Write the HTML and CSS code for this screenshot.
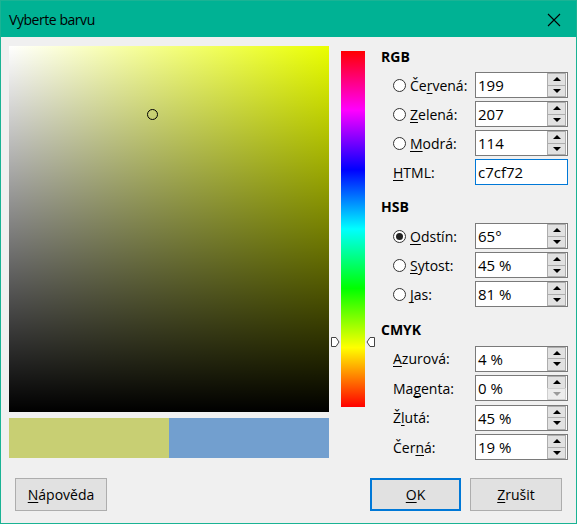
FILE: index.html
```html
<!DOCTYPE html>
<html lang="cs">
<head>
<meta charset="utf-8">
<title>Vyberte barvu</title>
<link rel="stylesheet" href="styles.css">
</head>
<body>
<div class="window">
  <header class="titlebar">
    <span class="title">Vyberte barvu</span>
    <svg class="close" width="14" height="14" viewBox="0 0 14 14"><path d="M1 1L13 13M13 1L1 13" stroke="#000" stroke-width="1.1" fill="none"/></svg>
  </header>

  <main class="content">
    <div class="picker">
      <div class="field-col">
        <div class="field">
          <span class="cursor"></span>
        </div>
        <div class="preview">
          <div class="swatch swatch-new"></div>
          <div class="swatch swatch-old"></div>
        </div>
      </div>

      <div class="hue-wrap">
        <div class="hue"></div>
        <svg class="marker marker-left" width="9" height="10" viewBox="0 0 9 10"><path d="M0.5 0.5H5L8 5L5 9.5H0.5Z" fill="#fff" stroke="#444"/></svg>
        <svg class="marker marker-right" width="9" height="10" viewBox="0 0 9 10"><path d="M8.5 0.5H4L1 5L4 9.5H8.5Z" fill="#fff" stroke="#444"/></svg>
      </div>

      <div class="panel">
        <section class="group">
          <h2 class="group-title">RGB</h2>
          <div class="row">
            <span class="radio"></span>
            <span class="label">Če<u>r</u>vená:</span>
            <div class="spin"><span class="value">199</span><span class="spin-btns"><span class="btn up"></span><span class="btn down"></span></span></div>
          </div>
          <div class="row">
            <span class="radio"></span>
            <span class="label"><u>Z</u>elená:</span>
            <div class="spin"><span class="value">207</span><span class="spin-btns"><span class="btn up"></span><span class="btn down"></span></span></div>
          </div>
          <div class="row">
            <span class="radio"></span>
            <span class="label"><u>M</u>odrá:</span>
            <div class="spin"><span class="value">114</span><span class="spin-btns"><span class="btn up"></span><span class="btn down"></span></span></div>
          </div>
          <div class="row">
            <span class="label"><u>H</u>TML:</span>
            <div class="spin spin-focus"><span class="value">c7cf72</span></div>
          </div>
        </section>

        <section class="group group-hsb">
          <h2 class="group-title">HSB</h2>
          <div class="row">
            <span class="radio checked"></span>
            <span class="label"><u>O</u>dstín:</span>
            <div class="spin"><span class="value">65°</span><span class="spin-btns"><span class="btn up"></span><span class="btn down"></span></span></div>
          </div>
          <div class="row">
            <span class="radio"></span>
            <span class="label"><u>S</u>ytost:</span>
            <div class="spin"><span class="value">45 %</span><span class="spin-btns"><span class="btn up"></span><span class="btn down"></span></span></div>
          </div>
          <div class="row">
            <span class="radio"></span>
            <span class="label"><u>J</u>as:</span>
            <div class="spin"><span class="value">81 %</span><span class="spin-btns"><span class="btn up"></span><span class="btn down"></span></span></div>
          </div>
        </section>

        <section class="group group-cmyk">
          <h2 class="group-title">CMYK</h2>
          <div class="row">
            <span class="label"><u>A</u>zurová:</span>
            <div class="spin"><span class="value">4 %</span><span class="spin-btns"><span class="btn up"></span><span class="btn down"></span></span></div>
          </div>
          <div class="row">
            <span class="label">Ma<u>g</u>enta:</span>
            <div class="spin"><span class="value">0 %</span><span class="spin-btns"><span class="btn up"></span><span class="btn down disabled"></span></span></div>
          </div>
          <div class="row">
            <span class="label">Ž<u>l</u>utá:</span>
            <div class="spin"><span class="value">45 %</span><span class="spin-btns"><span class="btn up"></span><span class="btn down"></span></span></div>
          </div>
          <div class="row">
            <span class="label">Čer<u>n</u>á:</span>
            <div class="spin"><span class="value">19 %</span><span class="spin-btns"><span class="btn up"></span><span class="btn down"></span></span></div>
          </div>
        </section>
      </div>
    </div>

    <footer class="buttons">
      <button class="button"><u>N</u>ápověda</button>
      <span class="spacer"></span>
      <button class="button button-default"><u>O</u>K</button>
      <button class="button"><u>Z</u>rušit</button>
    </footer>
  </main>
</div>
</body>
</html>
```

FILE: styles.css
```css
* { box-sizing: border-box; }

html, body {
  margin: 0;
  padding: 0;
  background: #f0f0f0;
}

body {
  font-family: "Open Sans", "Noto Sans", sans-serif;
  font-size: 14px;
  color: #000;
}

u {
  text-decoration-thickness: 1px;
  text-underline-offset: 2px;
  text-decoration-skip-ink: none;
}

.window {
  width: 577px;
  height: 524px;
  border: 1px solid #1ab394;
  background: #f0f0f0;
  display: flex;
  flex-direction: column;
}

/* title bar */
.titlebar {
  height: 36px;
  background: #00b294;
  display: flex;
  align-items: center;
  padding: 0 15px 0 8px;
  flex-shrink: 0;
}

.title {
  font-size: 14px;
  letter-spacing: -0.45px;
  flex: 1;
}

.close { display: block; margin-top: 1px; }

/* dialog body */
.content {
  flex: 1;
  display: flex;
  flex-direction: column;
}

.picker {
  display: flex;
  padding: 9px 0 0 8px;
}

.field-col {
  width: 320px;
  display: flex;
  flex-direction: column;
  gap: 6px;
}

.field {
  position: relative;
  height: 366px;
  background:
    linear-gradient(to bottom, rgba(0,0,0,0), #000),
    linear-gradient(to right, #fff, #eaff00);
}

.cursor {
  position: absolute;
  left: 138px;
  top: 63px;
  width: 11px;
  height: 11px;
  border: 1px solid #000;
  border-radius: 50%;
}

.preview {
  display: flex;
  height: 40px;
}

.swatch { flex: 1; }
.swatch-new { background: #c8cf73; }
.swatch-old { background: #729fcf; }

/* hue strip */
.hue-wrap {
  position: relative;
  width: 24px;
  height: 356px;
  margin: 5px 0 0 12px;
}

.hue {
  width: 100%;
  height: 100%;
  background: linear-gradient(to bottom,
    #f00 0%, #f0f 16.667%, #00f 33.333%, #0ff 50%,
    #0f0 66.667%, #ff0 83.333%, #f00 100%);
}

.marker {
  position: absolute;
  top: 286px;
  display: block;
}
.marker-left { left: -10px; }
.marker-right { left: 25px; }

/* value panel */
.panel {
  width: 187px;
  margin-left: 16px;
  padding-top: 1px;
  display: flex;
  flex-direction: column;
  gap: 12px;
}

.group {
  display: flex;
  flex-direction: column;
  gap: 3px;
}

.group-title {
  margin: 0 0 2px 0;
  font-size: 14px;
  font-weight: 700;
  line-height: 20px;
  height: 20px;
}

.group-hsb .group-title { margin-bottom: 3px; }
.group-cmyk { margin-top: 1px; gap: 3.5px; }

.row {
  display: flex;
  align-items: center;
  height: 26px;
  padding-left: 12px;
}

.radio {
  width: 13px;
  height: 13px;
  border: 1px solid #333;
  border-radius: 50%;
  background: #fff;
  margin-right: 4px;
  flex-shrink: 0;
  position: relative;
}

.radio.checked::after {
  content: "";
  position: absolute;
  left: 2px;
  top: 2px;
  width: 7px;
  height: 7px;
  border-radius: 50%;
  background: #222;
}

.label {
  flex: 1;
  font-size: 14px;
  white-space: nowrap;
}

.spin {
  width: 93px;
  height: 26px;
  border: 1px solid #7a7a7a;
  background: #fff;
  display: flex;
  align-items: center;
  padding-left: 2px;
}

.spin-focus { border-color: #0078d7; }

.value {
  flex: 1;
  font-size: 15px;
}

.spin-btns {
  display: flex;
  flex-direction: column;
  width: 19px;
  height: 24px;
  margin-right: 1px;
}

.btn {
  flex: 1;
  border: 1px solid #adadad;
  background: #e1e1e1;
  position: relative;
}
.btn + .btn { margin-top: -1px; }

.btn::after {
  content: "";
  position: absolute;
  left: 50%;
  top: 50%;
  width: 0;
  height: 0;
  border-left: 4px solid transparent;
  border-right: 4px solid transparent;
  transform: translate(-50%, -50%);
}
.btn.up::after { border-bottom: 4px solid #000; }
.btn.down::after { border-top: 4px solid #000; }
.btn.disabled { background: #ececec; border-color: #cfcfcf; }
.btn.down.disabled::after { border-top-color: #9a9a9a; }

/* dialog buttons */
.buttons {
  display: flex;
  gap: 9px;
  padding: 0 14px 0 14px;
  margin-top: 18px;
}

.spacer { flex: 1; }

.button {
  font-family: inherit;
  font-size: 14px;
  color: #000;
  width: 92px;
  height: 33px;
  border: 1px solid #adadad;
  background: #e1e1e1;
  padding: 0;
}

.button-default {
  width: 91px;
  border: 2px solid #0078d7;
}
```
